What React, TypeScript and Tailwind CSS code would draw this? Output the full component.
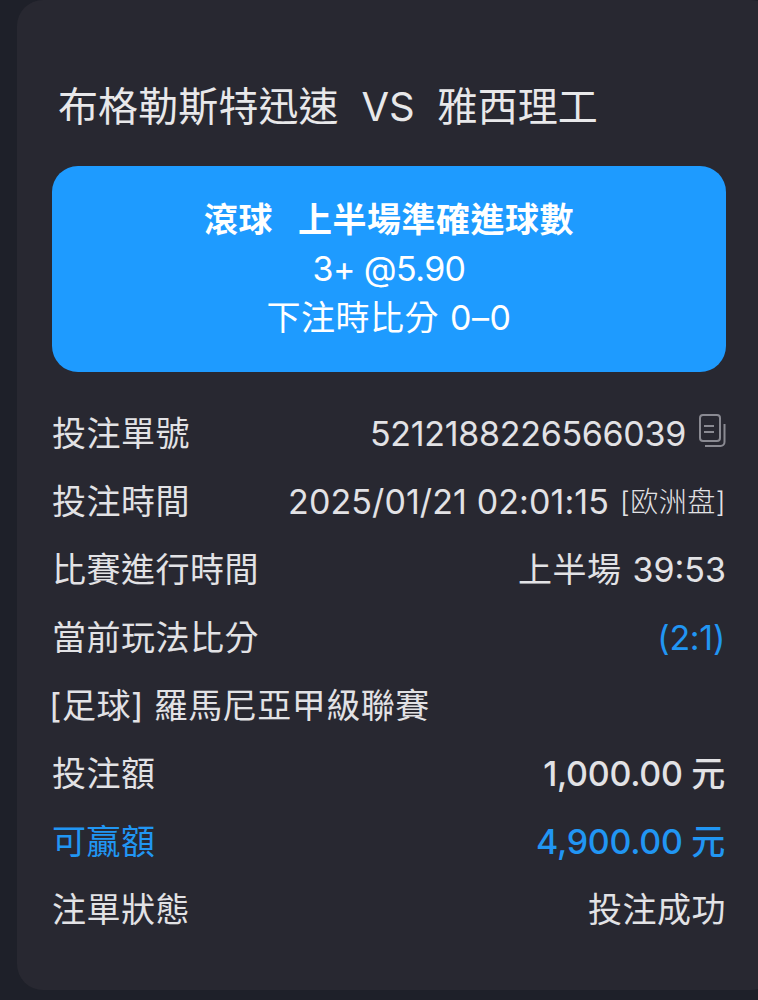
import React, { FC } from "react";

const font = { fontFamily: "Inter, 'Noto Sans CJK TC', sans-serif" };

type RowProps = {
	label: string;
	value?: React.ReactNode;
	blue?: boolean;
};

const Row: FC<RowProps> = ({ label, value, blue }) => (
	<div className={`flex h-[68px] items-center justify-between ${blue ? "text-[#2196f3]" : "text-[#e2e2e5]"}`}>
		<span className="tracking-[0.5px]">{label}</span>
		{value}
	</div>
);

const CopyIcon: FC = () => (
	<svg width="27" height="34" viewBox="0 0 27 34" fill="none" stroke="#8a8a92" strokeWidth="2" className="ml-[13px] mb-[6px]">
		<rect x="1" y="1" width="20" height="26" rx="3" />
		<path d="M5 12h10M5 18h10" />
		<path d="M25.5 10v18a4 4 0 0 1-4 4H6" />
	</svg>
);

export default function App() {
	return (
		<div className="h-[1000px] w-[758px] overflow-hidden bg-[#1e2029] text-[34px] leading-none" style={font}>
			<div className="ml-[17px] h-[990px] w-[760px] rounded-[26px] bg-[#282831] pl-[35px] pr-[32px]">
				<div className="flex h-[166px] items-start pl-[6px] pt-[87px] text-[40px] tracking-[0.1px] text-[#e8e8ea] whitespace-pre">
					布格勒斯特迅速  VS  雅西理工
				</div>
				<div className="flex h-[206px] w-[674px] flex-col items-center justify-center gap-[15px] rounded-[26px] bg-[#1e9bff] text-white">
					<div className="flex gap-[25px] font-bold tracking-[0.5px]">
						<span>滾球</span>
						<span>上半場準確進球數</span>
					</div>
					<div className="tracking-[-0.6px]">3+ @5.90</div>
					<div className="flex gap-[11px] tracking-[0.5px]">
						<span>下注時比分</span>
						<span>0–0</span>
					</div>
				</div>
				<div className="mt-[28px] w-[674px]">
					<Row
						label="投注單號"
						value={
							<span className="flex items-center tracking-[-0.3px]">
								5212188226566039
								<CopyIcon />
							</span>
						}
					/>
					<Row
						label="投注時間"
						value={
							<span className="flex items-center gap-[11px]">
								<span className="tracking-[0.1px]">2025/01/21 02:01:15</span>
								<span className="text-[28px] font-light tracking-[0.5px]">[欧洲盘]</span>
							</span>
						}
					/>
					<Row
						label="比賽進行時間"
						value={
							<span className="flex gap-[11px]">
								<span className="tracking-[0.5px]">上半場</span>
								<span>39:53</span>
							</span>
						}
					/>
					<Row label="當前玩法比分" value={<span className="mr-[1px] tracking-[-0.3px] text-[#2196f3]">(2:1)</span>} />
					<div className="-ml-[3px]">
						<Row label="[足球] 羅馬尼亞甲級聯賽" />
					</div>
					<Row label="投注額" value={<span className="mr-[1px] font-medium tracking-[-0.3px]">1,000.00 元</span>} />
					<Row label="可贏額" value={<span className="mr-[1px] font-medium tracking-[-0.3px]">4,900.00 元</span>} blue />
					<Row label="注單狀態" value={<span className="tracking-[0.5px]">投注成功</span>} />
				</div>
			</div>
		</div>
	);
}
